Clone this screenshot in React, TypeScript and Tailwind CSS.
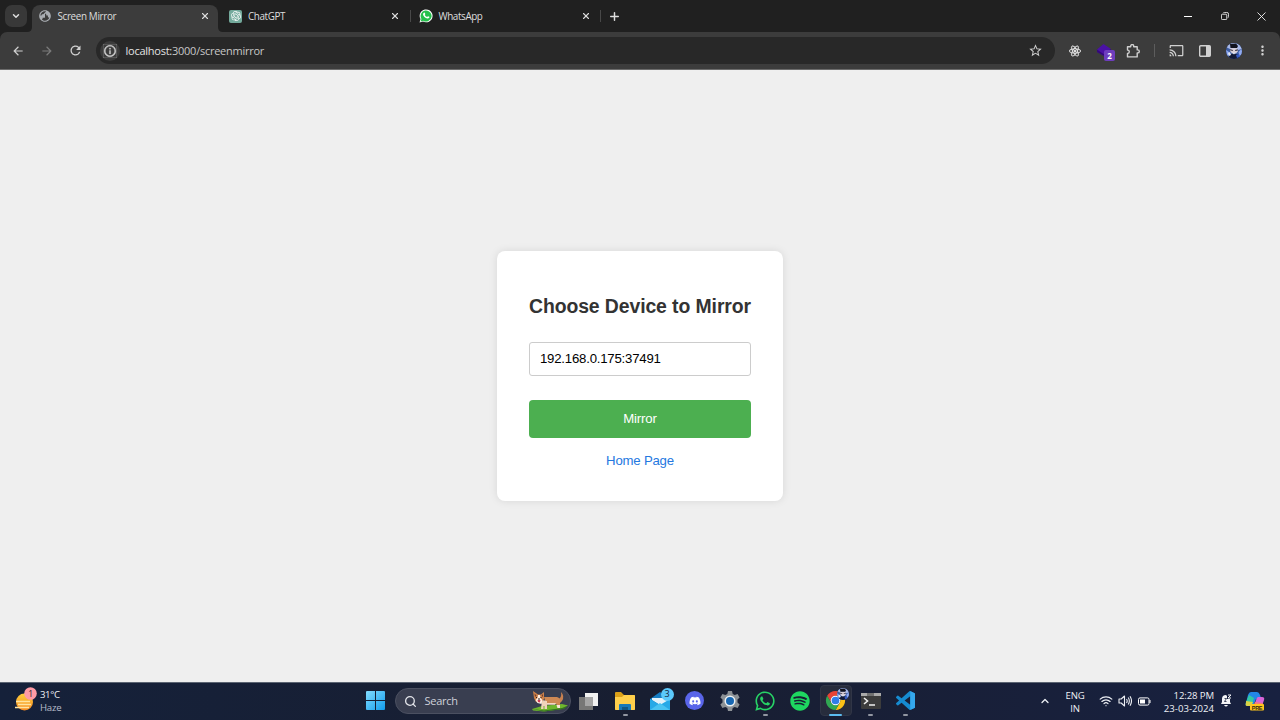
import type { ReactNode } from "react";
import { FaReact, FaWhatsapp, FaSpotify, FaDiscord } from "react-icons/fa";
import { MdArrowBack, MdArrowForward, MdRefresh, MdStarOutline, MdCast, MdMoreVert, MdInfoOutline, MdPublic } from "react-icons/md";
import { SiOpenai } from "react-icons/si";
import { ChevronDown, ChevronUp, X, Plus, Search, Wifi } from "lucide-react";

function Slot({ className = "", children }: { className?: string; children: ReactNode }) {
  return <div className={`flex shrink-0 items-center justify-center ${className}`}>{children}</div>;
}

function WhatsAppBadge() {
  return (
    <svg viewBox="0 0 26 26" className="size-[14px] shrink-0">
      <path d="M1 25l1.8-6.2A12 12 0 1 1 7.400 23.300Z" fill="#fff" />
      <path d="M3 23l1.500-4.600A10.200 10.200 0 1 1 7.800 21.700Z" fill="#25c04c" />
      <path d="M9.300 6.800c.8-.4 1.300-.1 1.700.8l.7 1.800c.1.700-.8 1.300-.9 1.800.9 1.900 2.300 3.100 4.200 3.800.8-.2 1.200-1.600 1.900-1.500l2.300 1.100c.7 1.900-1.600 3.500-3.400 3.200-4.400-.8-7.900-4.300-8.300-7.500-.1-1.400.7-2.800 1.800-3.500Z" fill="#fff" />
    </svg>
  );
}

function Avatar({ className }: { className: string }) {
  return (
    <svg viewBox="0 0 16 16" className={className}>
      <defs><clipPath id="face"><circle cx="8" cy="8" r="8" /></clipPath></defs>
      <g clipPath="url(#face)">
        <path d="M0 0h16v16H0z" fill="#3d5ea4" />
        <path d="M0 4q4-5 8-4q6 0 8 6l-4 1-8-1Z" fill="#a9b9e8" />
        <path d="M4 1l6-.5 2 2.500-1 2H4.500Z" fill="#11121d" />
        <path d="M4.500 5.200h6.500l1 3-2 2.300H6L4 8Z" fill="#d8d0d8" />
        <path d="M4 6.300l3 .6v.9l-2.500-.3zM9 6.900l3-.6-.6 1.400H9z" fill="#252032" />
        <path d="M0 7l3 2 1 3-3 1ZM12.500 9l3-3 1 5-3 2Z" fill="#91aaf0" />
        <path d="M3 12l4-1.500 5 1 2 4.500H3Z" fill="#131b38" />
        <path d="M2 10l2-1 1 3-2 1ZM6 9.500h3.500L8 11.500Z" fill="#e3e8f3" />
        <path d="M10 12l3-1 1 3-3 1Z" fill="#355cc8" />
      </g>
    </svg>
  );
}

function TabStrip() {
  return (
    <div className="flex h-8 shrink-0 items-start bg-[#202020] pt-[5px] text-[10px] text-[#dedede]">
      <Slot className="ml-[5px] size-[22px] rounded-[7px] bg-[#383838]"><ChevronDown size={10} strokeWidth={3.5} /></Slot>
      <div className="flex w-[5px] self-end"><svg viewBox="0 0 5 5" className="size-[5px]"><path d="M5 0v5H0q5 0 5-5Z" fill="#3c3c3c" /></svg></div>
      <div className="flex h-[27px] w-[186px] items-center rounded-t-[8px] bg-[#3c3c3c] pb-[5px] pl-[6px] pr-[8px]">
        <MdPublic size={14} color="#a9adb2" className="rotate-90" />
        <span className="ml-[5.500px] flex-1 pt-[1px] text-[9.900px] tracking-[-0.360px]">Screen Mirror</span>
        <X size={10} strokeWidth={2.6} />
      </div>
      <div className="flex w-[5px] self-end"><svg viewBox="0 0 5 5" className="size-[5px]"><path d="M0 0v5h5Q0 5 0 0Z" fill="#3c3c3c" /></svg></div>
      <div className="ml-[6px] flex h-[22px] w-[171px] items-center">
        <Slot className="size-[13px] rounded-[2px] bg-[#74aa9c]"><SiOpenai size={10} color="#fff" /></Slot>
        <span className="ml-[6px] flex-1 pt-[1px] text-[9.900px] tracking-[-0.4px]">ChatGPT</span>
        <X size={10} strokeWidth={2.6} />
      </div>
      <div className="ml-[10px] mt-[5px] h-[12px] w-px bg-[#484848]" />
      <div className="ml-[8px] flex h-[22px] w-[172px] items-center">
        <WhatsAppBadge />
        <span className="ml-[5.500px] flex-1 pt-[1px] text-[9.900px] tracking-[-0.4px]">WhatsApp</span>
        <X size={10} strokeWidth={2.6} />
      </div>
      <div className="ml-[9px] mt-[5px] h-[12px] w-px bg-[#484848]" />
      <Slot className="ml-[2px] size-[22px]"><Plus size={13} strokeWidth={2.7} /></Slot>
      <div className="ml-auto flex h-[22px] text-[#f2f2f2]">
        <Slot className="w-[37px]"><div className="h-px w-[8px] bg-white" /></Slot>
        <Slot className="w-[37px]">
          <svg viewBox="0 0 9 9" className="size-[8px]" fill="none" stroke="currentColor"><rect x=".5" y="2.500" width="6" height="6" rx="1" /><path d="M2.500 1.300Q2.700.5 4 .5h2.500q2 0 2 2V5q0 1-.8 1.500" /></svg>
        </Slot>
        <Slot className="w-[37px]">
          <svg viewBox="0 0 9 9" className="size-[9px]" stroke="currentColor" strokeWidth=".9"><path d="M.5.500l8 8M8.500.500l-8 8" /></svg>
        </Slot>
      </div>
    </div>
  );
}

function Toolbar() {
  return (
    <div className="bg-[#202020]">
      <div className="flex h-[38px] shrink-0 items-center rounded-t-[7px] border-b border-[#6c6c6c] bg-[#3c3c3c] text-[#d0d0d0]">
        <Slot className="ml-[4px] w-[28px]"><MdArrowBack size={14} /></Slot>
        <Slot className="w-[29px] text-[#7c7c7c]"><MdArrowForward size={14} /></Slot>
        <Slot className="w-[28px]"><MdRefresh size={15} /></Slot>
        <div className="ml-[7px] flex h-[27px] w-[959px] items-center rounded-full bg-[#282828] pl-[4px] pr-[12px]">
          <Slot className="size-[20px] rounded-full bg-[#3c3c3c]"><MdInfoOutline size={14} stroke="currentColor" strokeWidth=".6" /></Slot>
          <span className="ml-[5.500px] flex-1 pt-[1px] text-[11px] tracking-[-0.250px] text-[#e3e3e3]">
            localhost:<span className="text-[#c7c7c7]">3000/screenmirror</span>
          </span>
          <MdStarOutline size={15} />
        </div>
        <Slot className="ml-[6px] w-[28px]"><FaReact size={12} color="#f1f1f1" stroke="#f1f1f1" strokeWidth="16" /></Slot>
        <Slot className="relative h-[27px] w-[30px]">
          <svg viewBox="0 0 14 12" className="mb-[2px] h-[12px] w-[14px]"><path d="M0 5.500L6.500 0 14 5v2L7 12 0 8Z" fill="#4a11a4" /><path d="M0 5.500L6.500 10 14 5v2L7 12 0 8Z" fill="#330a78" /></svg>
          <span className="absolute left-[15px] top-[13px] flex h-[11px] w-[11px] items-center justify-center rounded-[2px] bg-[#6d3dbe] text-[8px] font-bold text-white">2</span>
        </Slot>
        <Slot className="w-[28px]">
          <svg viewBox="0 0 14 14" className="size-[14px]" fill="none" stroke="currentColor" strokeWidth="1.400"><path d="M1.500 2.700h3.200V2a1.500 1.500 0 0 1 3 0v.7h3.500v3.200h.6a1.500 1.500 0 0 1 0 3h-.6v4H1.500V9.500q1.800 0 1.800-1.700T1.500 6.100Z" strokeLinejoin="round" /></svg>
        </Slot>
        <div className="ml-[7px] h-[13px] w-px bg-[#5d5d5d]" />
        <Slot className="ml-[7px] w-[28px]"><MdCast size={15} /></Slot>
        <Slot className="w-[29px]">
          <svg viewBox="0 0 12 12" className="size-[12px]"><rect x=".7" y=".7" width="10.600" height="10.600" rx="1" fill="none" stroke="currentColor" strokeWidth="1.400" /><path d="M7 1h4v10H7z" fill="currentColor" /></svg>
        </Slot>
        <Slot className="w-[29px]"><Avatar className="size-[16px]" /></Slot>
        <Slot className="w-[28px]"><MdMoreVert size={15} /></Slot>
      </div>
    </div>
  );
}

function Task({ children, bar = "none", className = "w-[35.200px]" }: { children: ReactNode; bar?: "none" | "open" | "active"; className?: string }) {
  return (
    <div className={`flex h-[38px] shrink-0 flex-col items-center pt-[7px] ${className}`}>
      <div className="flex h-[22px] items-center justify-center">{children}</div>
      {bar === "open" && <div className="mt-[2px] h-[2px] w-[5px] shrink-0 rounded-full bg-[#9297a2]" />}
      {bar === "active" && <div className="relative mt-[2px] h-[2px] w-[13px] shrink-0 rounded-full bg-[#5cbcf0]" />}
    </div>
  );
}

function Corgi() {
  return (
    <svg viewBox="0 0 38 22" className="h-[22px] w-[38px]">
      <path d="M1 19l10-3 20-2 6 1.500-6 3.500-18 2.500-11-1Z" fill="#6fb52e" />
      <path d="M1 19l12 1.500 18-2.500 6-2.500-4 3.500-20 2.500Z" fill="#34731f" />
      <path d="M27 9q4-1 3-7q4 4 1 9l-3 3Z" fill="#c78150" />
      <path d="M13 7h13q4 1 3 6v5h-2.500l-1-4H15Z" fill="#cf8954" />
      <path d="M15 13h10l-1 1.800h-9Z" fill="#f3d9c2" />
      <path d="M11 10l5 1v8h-2.500v-3h-1V19H10Z" fill="#efd3bb" />
      <path d="M25.500 15h3.500v3h-2.500Z" fill="#f7e7d9" />
      <path d="M2 1l5 3.500h3L13 2v7l-3 4-5-1-2-4Z" fill="#cf8248" />
      <path d="M3.500 3.500L5.500 5.500 4 7ZM12 4v3l-1.500-1.500Z" fill="#704034" />
      <path d="M7 5h2l.5 3 2 2-1 4-4-1-2-3 2-2Z" fill="#fff0e4" />
      <path d="M6.500 10h3l-.7 2.500-1.800-.5Z" fill="#ce3c56" />
      <path d="M5 7h1v1H5zM9.500 7h1v1h-1zM7 8.500h2v1H7z" fill="#2c1d20" />
    </svg>
  );
}

function Chrome() {
  return (
    <svg viewBox="0 0 48 48" className="size-[21px]">
      <path d="M4.950 13A22 22 0 0 1 43.050 13H24A11 11 0 0 0 14.470 29.500Z" fill="#e94335" />
      <path d="M4.950 13A22 22 0 0 1 43.050 13H24A11 11 0 0 0 14.470 29.500Z" fill="#fbc116" transform="rotate(120 24 24)" />
      <path d="M4.950 13A22 22 0 0 1 43.050 13H24A11 11 0 0 0 14.470 29.500Z" fill="#31a852" transform="rotate(240 24 24)" />
      <circle cx="24" cy="24" r="11" fill="#fff" /><circle cx="24" cy="24" r="8.800" fill="#2f7de9" />
    </svg>
  );
}

function Taskbar() {
  return (
    <div className="flex h-[38px] shrink-0 items-center border-t border-[#5b6472] bg-linear-to-r from-[#15213a] via-[#181e31] to-[#182140] text-[#eef0f5]">
      <div className="flex w-[361px] items-center pb-[1px] pl-[14px]">
        <svg viewBox="0 0 24 26" className="mb-[2px] h-[26px] w-[24px] shrink-0">
          <defs><linearGradient id="sun" x2="0" y2="1"><stop stopColor="#ffcf3b" /><stop offset="1" stopColor="#f58a22" /></linearGradient></defs>
          <circle cx="10.500" cy="15" r="8.500" fill="url(#sun)" />
          <path d="M2 14.500h14M4 17.500h13M1 20.500h14" stroke="#ffe3a0" strokeWidth="1.300" />
          <circle cx="16.500" cy="6.500" r="6.300" fill="#ff9ba5" />
          <text x="16.800" y="9.800" textAnchor="middle" fontFamily="Open Sans" fontSize="8.500" fill="#2c1c2a">1</text>
        </svg>
        <div className="ml-[2px] text-[9.600px] leading-[13px] tracking-[-0.4px]"><div>31°C</div><div className="tracking-[-0.2px] text-[#b6bbc8]">Haze</div></div>
      </div>
      <Task className="w-[28px]">
        <svg viewBox="0 0 19 19" className="size-[19px]">
          <defs><linearGradient id="win" x2="1" y2="1"><stop stopColor="#82dcff" /><stop offset="1" stopColor="#119cec" /></linearGradient></defs>
          <path d="M1 0h8v9H0V1q0-1 1-1M10 0h8q1 0 1 1v8h-9M0 10h9v9H1q-1 0-1-1M10 10h9v8q0 1-1 1h-8Z" fill="url(#win)" />
        </svg>
      </Task>
      <div className="mb-[1px] ml-[5.500px] flex h-[26px] w-[176px] items-center rounded-full border border-[#4b5061] bg-[#393e50] pl-[8px] text-[11px] tracking-[-0.280px] text-[#ced1da]">
        <Search size={13} strokeWidth={2.4} color="#e3e5ea" />
        <span className="ml-[8px] flex-1">Search</span><Corgi />
        <span className="w-[1px]" />
      </div>
      <Task className="w-[37.500px]">
        <svg viewBox="0 0 20 18" className="h-[18px] w-[20px]"><path d="M6 1h13v13H6z" fill="#f1f1f1" /><path d="M0 5h14v13H0z" fill="#777776" /><path d="M6 5h8v9H6z" fill="#a5a5a5" /></svg>
      </Task>
      <Task bar="open" className="w-[34px]">
        <svg viewBox="0 0 20 18" className="h-[18px] w-[20px]"><path d="M0 1q0-1 1-1h5l3 3h10q1 0 1 1v13q0 1-1 1H1q-1 0-1-1Z" fill="#dba018" /><path d="M0 5h7l2-2h10q1 0 1 1v13q0 1-1 1H1q-1 0-1-1Z" fill="#ffcf4b" /><path d="M4 18v-5q0-1 1-1h10q1 0 1 1v5Z" fill="#1879b9" /><path d="M7 15h6v3H7Z" fill="#125784" /></svg>
      </Task>
      <Task>
        <div className="relative h-[20px] w-[20px]">
          <svg viewBox="0 0 20 20" className="size-[20px]"><path d="M0 8L10 1l10 7v11H0Z" fill="#157cc3" /><path d="M2 7h16v6L10 14 2 9Z" fill="#e2f2fa" /><path d="M0 8l10 6 10-6v11H0Z" fill="#26a9e7" /><path d="M0 19l10-7 10 7Z" fill="#49c3f2" /></svg>
          <span className="absolute -right-[4px] -top-[3px] flex size-[13px] items-center justify-center rounded-full bg-[#5bc9fc] text-[9px] text-[#15253a]">3</span>
        </div>
      </Task>
      <Task><Slot className="size-[19px] rounded-full bg-[#5965e9]"><FaDiscord size={12} color="#fff" /></Slot></Task>
      <Task>
        <svg viewBox="0 0 20 20" className="size-[20px]">
          <path d="M8 0h4l.7 3 2 1.100L17.600 3l2 3.500-2.100 2v3l2.100 2-2 3.500-2.900-1-2 1.100L12 20H8l-.7-2.900-2-1.100-2.900 1-2-3.500 2.100-2v-3l-2.100-2L2.400 3l2.900 1.100 2-1.100Z" fill="#8c9196" />
          <circle cx="10" cy="10" r="5.500" fill="#edf1f4" /><circle cx="10" cy="10" r="4" fill="#1767b3" />
        </svg>
      </Task>
      <Task bar="open"><FaWhatsapp size={22} color="#27d366" /></Task>
      <Task><FaSpotify size={20} color="#1ed760" /></Task>
      <Task bar="active">
        <div className="relative flex h-[31px] w-[32px] items-center justify-center rounded-[4px] border border-[#303546] bg-[#272c3c]">
          <Chrome /><Avatar className="absolute right-[2px] top-[2px] size-[12px]" />
        </div>
      </Task>
      <Task bar="open">
        <svg viewBox="0 0 20 16" className="h-[16px] w-[20px]"><rect width="20" height="16" rx="1" fill="#3c3c3c" /><path d="M0 0h20v3H0z" fill="#aaa" /><path d="M6 0h7v3H6z" fill="#717171" /><path d="M3 5l3.500 3L3 11M8 12h6" fill="none" stroke="#eee" strokeWidth="1.600" /></svg>
      </Task>
      <Task bar="open">
        <svg viewBox="0 0 24 24" className="size-[19px]"><path d="M23.150 2.587L18.210.21a1.494 1.494 0 0 0-1.705.29l-9.460 8.630-4.120-3.128a.999.999 0 0 0-1.276.057L.327 7.261A1 1 0 0 0 .326 8.740L3.899 12 .326 15.260a1 1 0 0 0 .001 1.479L1.650 17.940a.999.999 0 0 0 1.276.057l4.120-3.128 9.460 8.630a1.492 1.492 0 0 0 1.704.29l4.942-2.377A1.500 1.500 0 0 0 24 20.060V3.939a1.500 1.500 0 0 0-.85-1.352zm-5.146 14.861L10.826 12l7.178-5.448v10.896z" fill="#168bd0" /><path d="M18 0l6 3v18l-6 3Z" fill="#35a8ed" /></svg>
      </Task>
      <div className="ml-auto flex items-center pb-[1px] pr-[15px] text-[9.600px] leading-[13px] tracking-[-0.250px]">
        <ChevronUp size={12} strokeWidth={2.500} />
        <div className="ml-[13px] w-[22px] pt-[1px] text-center">ENG<br />IN</div>
        <Wifi size={14} strokeWidth={2} className="ml-[13px]" />
        <svg viewBox="0 0 14 14" className="ml-[5px] size-[14px]" fill="none" stroke="currentColor" strokeWidth="1.100"><path d="M1 5h2.200L6.500 2v10L3.200 9H1ZM8.500 5q1.400 2 0 4M10.200 3.500q2.300 3.500 0 7M12 2.300q3 4.700 0 9.400" strokeLinejoin="round" /></svg>
        <svg viewBox="0 0 13 9" className="ml-[6px] h-[9px] w-[13px]"><rect x=".5" y=".9" width="10.500" height="7.200" rx="1.500" fill="none" stroke="white" /><path d="M2 2.400h5v4.200H2zM11.500 3h1v3h-1z" fill="white" /></svg>
        <div className="ml-[11px] w-[52px] whitespace-nowrap pt-[1px] text-right"><div className="tracking-[-0.120px]">12:28 PM</div><div className="tracking-[0.010px]">23-03-2024</div></div>
        <svg viewBox="0 0 13 14" className="ml-[6px] h-[14px] w-[13px]"><path d="M1 10l1-2V5q0-4 4-4l1 1v3h3v3l1 2ZM4 11h4q-2 3-4 0" fill="#f4f5f8" /><path d="M8 1h3L8 4h3M5 5h2L5 8h2" fill="none" stroke="#f4f5f8" /><path d="M4.500 4.500h2l-2 3h2" fill="none" stroke="#18203a" strokeWidth=".8" /></svg>
        <svg viewBox="0 0 20 20" className="ml-[12px] size-[20px]">
          <path d="M6 1h6q2 0 3 3l1 3-5 1-2 5q-1 2-3 2H2q-2 0-1-3L3 4q1-3 3-3Z" fill="#2387e8" />
          <path d="M4 4l5 3-2 7H2q-2 0-1-3Z" fill="#33c9a3" /><path d="M1 10l7 1-2 4H2q-2 0-1-3Z" fill="#d9d345" />
          <path d="M13 6h4q3 0 2 3l-2 6H9l2-6q1-3 2-3Z" fill="#d864d8" /><path d="M10 11l8 1-2 4H8Z" fill="#f67e77" />
          <rect x="5" y="13" width="14" height="6.500" rx="1" fill="#ffc51d" /><text x="12" y="18.500" textAnchor="middle" fontFamily="Liberation Sans" fontSize="5.500" fontWeight="bold" fill="#302710">PRE</text>
        </svg>
      </div>
    </div>
  );
}

export default function App() {
  return (
    <div className="flex h-[720px] w-[1280px] flex-col overflow-hidden bg-[#efefef] font-['Open_Sans','Noto_Sans',sans-serif]">
      <TabStrip />
      <Toolbar />
      <main className="flex flex-1 items-center justify-center font-['Liberation_Sans',Arial,sans-serif]">
        <section className="flex h-[250px] w-[286px] flex-col rounded-[8px] bg-white px-[32px] pt-[44px] shadow-[0_0_8px_rgba(0,0,0,0.1)]">
          <h1 className="-mx-1 whitespace-nowrap text-center text-[19.400px] font-bold leading-[23px] tracking-[-0.090px] text-[#333]">Choose Device to Mirror</h1>
          <input aria-label="Device" defaultValue="192.168.0.175:37491" className="mt-[24px] h-[34px] w-full rounded-[3px] border border-[#ccc] px-[10px] pb-[2px] text-[13.200px] tracking-[-0.210px] text-black outline-none" />
          <button className="mt-[24px] h-[38px] rounded-[4px] bg-[#4caf50] text-[13.200px] tracking-[-0.150px] text-white">Mirror</button>
          <a href="#home" className="mt-[15px] text-center text-[13.200px] leading-[16px] tracking-[-0.210px] text-[#2478df]">Home Page</a>
        </section>
      </main>
      <Taskbar />
    </div>
  );
}
